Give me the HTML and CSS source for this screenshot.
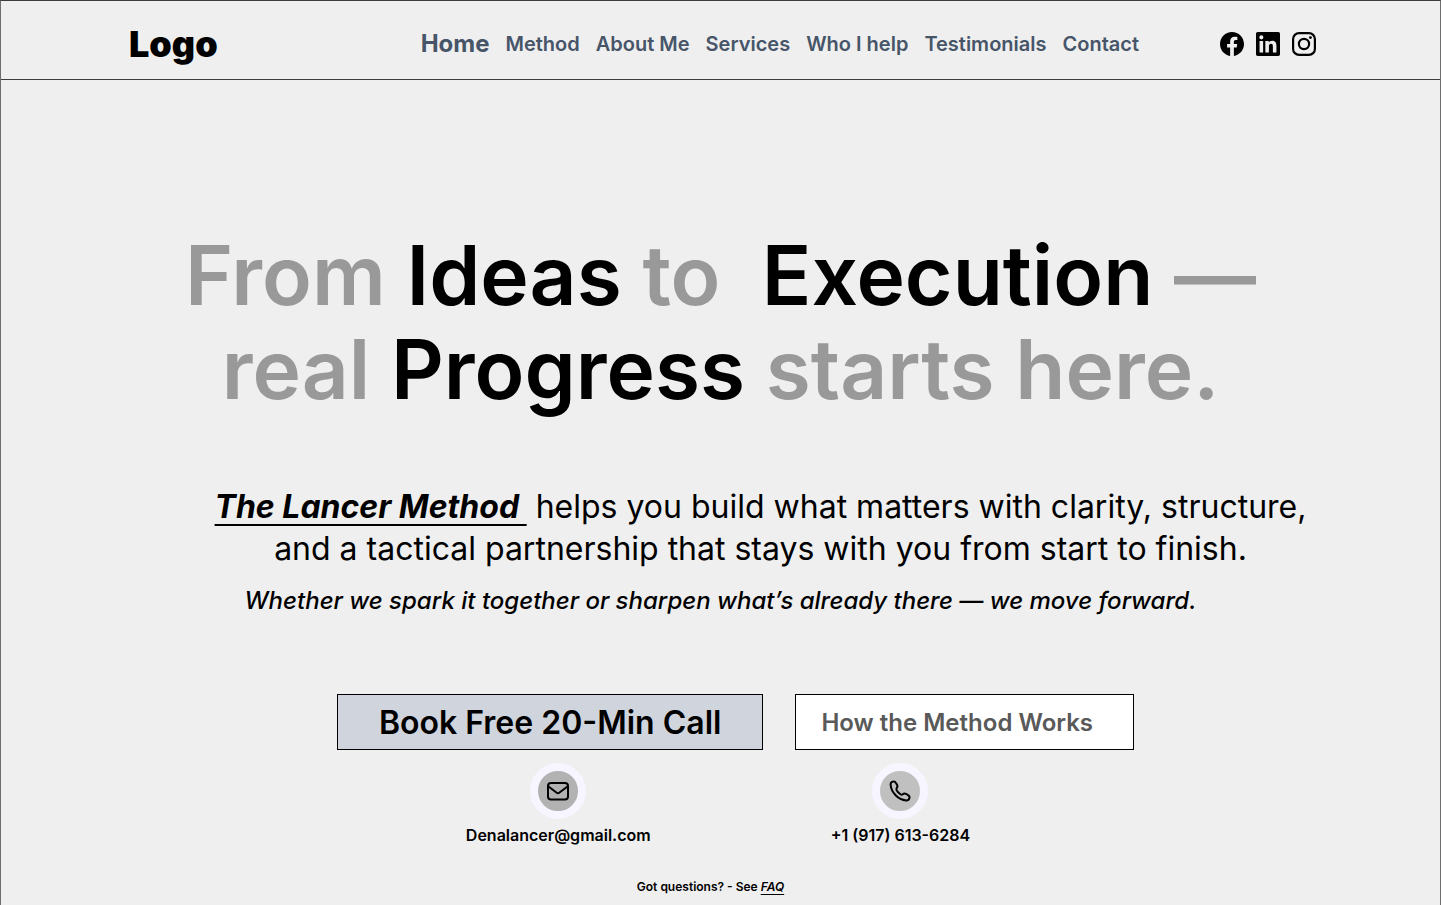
FILE: index.html
```html
<!DOCTYPE html>
<html lang="en">
<head>
<meta charset="utf-8">
<meta name="viewport" content="width=device-width, initial-scale=1">
<title>The Lancer Method</title>
<link rel="stylesheet" href="styles.css">
</head>
<body>
<div class="page">
  <header class="header">
    <a class="logo" href="#">Logo</a>
    <nav class="nav" aria-label="Main">
      <a class="nav-link nav-link-current" href="#" aria-current="page">Home</a>
      <a class="nav-link" href="#method">Method</a>
      <a class="nav-link" href="#about">About Me</a>
      <a class="nav-link" href="#services">Services</a>
      <a class="nav-link" href="#who">Who I help</a>
      <a class="nav-link" href="#testimonials">Testimonials</a>
      <a class="nav-link" href="#contact">Contact</a>
    </nav>
    <div class="social">
      <a class="social-link" href="#" aria-label="Facebook">
        <svg class="social-icon" viewBox="0 0 24 24"><path d="M24 12.07C24 5.4 18.63 0 12 0S0 5.4 0 12.07C0 18.1 4.39 23.1 10.13 24v-8.44H7.08v-3.49h3.05V9.41c0-3.02 1.79-4.69 4.53-4.69 1.31 0 2.68.24 2.68.24v2.97h-1.51c-1.49 0-1.96.93-1.96 1.89v2.25h3.33l-.53 3.49h-2.8V24C19.61 23.1 24 18.1 24 12.07z"/></svg>
      </a>
      <a class="social-link" href="#" aria-label="LinkedIn">
        <svg class="social-icon" viewBox="0 0 24 24"><path d="M22.23 0H1.77C.79 0 0 .77 0 1.73v20.54C0 23.23.79 24 1.77 24h20.46c.98 0 1.77-.77 1.77-1.73V1.73C24 .77 23.21 0 22.23 0zM7.12 20.45H3.56V9h3.56v11.45zM5.34 7.43a2.06 2.06 0 1 1 0-4.12 2.06 2.06 0 0 1 0 4.12zm15.11 13.02h-3.56v-5.57c0-1.33-.02-3.04-1.85-3.04-1.85 0-2.14 1.45-2.14 2.94v5.67H9.35V9h3.41v1.56h.05c.48-.9 1.64-1.85 3.37-1.85 3.6 0 4.27 2.37 4.27 5.46v6.28z"/></svg>
      </a>
      <a class="social-link" href="#" aria-label="Instagram">
        <svg class="social-icon" viewBox="0 0 24 24"><rect x="1.1" y="1.1" width="21.8" height="21.8" rx="6" fill="none" stroke="currentColor" stroke-width="2.2"/><circle cx="12" cy="12" r="5.1" fill="none" stroke="currentColor" stroke-width="2.2"/><circle cx="18.4" cy="5.6" r="1.45"/></svg>
      </a>
    </div>
  </header>

  <main class="hero">
    <h1 class="title">From <strong class="title-key">Ideas</strong> to&nbsp; <strong class="title-key">Execution</strong> —<br>real <strong class="title-key">Progress</strong> starts here.</h1>
    <p class="lead"><a class="lead-link" href="#method">The Lancer Method&nbsp;</a> helps you build what matters with clarity, structure,<br>and a tactical partnership that stays with you from start to finish.</p>
    <p class="note">Whether we spark it together or sharpen what’s already there — we move forward.</p>

    <div class="actions">
      <button class="button button-primary" type="button">Book Free 20-Min Call</button>
      <button class="button button-secondary" type="button">How the Method Works</button>
    </div>

    <div class="contacts">
      <a class="contact" href="mailto:Denalancer@gmail.com">
        <span class="badge badge-mail">
          <svg class="badge-icon" viewBox="0 0 24 24"><rect x="2" y="4" width="20" height="16.5" rx="3"/><path d="M2.500 7.500l8.200 6.300a2 2 0 0 0 2.500 0L21.500 7.500"/></svg>
        </span>
        Denalancer@gmail.com
      </a>
      <a class="contact" href="tel:+19176136284">
        <span class="badge badge-phone">
          <svg class="badge-icon" viewBox="0 0 24 24"><path d="M8.600 9.300C9.600 8.300 9.700 7 8.900 5.600L8.100 4.200C7.300 2.700 6 2.200 4.700 2.600 3.300 3 2.500 4.200 2.600 5.800c.3 3.800 2.100 7.500 5 10.500s6.700 4.800 10.600 5.100c1.600.1 2.800-.7 3.200-2.100.4-1.300-.1-2.600-1.600-3.400l-1.400-.8c-1.400-.8-2.700-.7-3.700.3-.8.800-1.900.4-3.500-1.100s-3.400-3.700-2.600-5z"/></svg>
        </span>
        +1 (917) 613-6284
      </a>
    </div>

    <p class="faq">Got questions? - See <a class="faq-link" href="#faq">FAQ</a></p>
  </main>
</div>
</body>
</html>
```
FILE: styles.css
```css
* {
  box-sizing: border-box;
}

body {
  margin: 0;
  background: #efefef;
  color: #000;
  font-family: Inter, "Liberation Sans", sans-serif;
}

a {
  color: inherit;
  text-decoration: none;
}

.page {
  min-height: 100vh;
  border: 1px solid #6e6e6e;
  border-top-color: #3c3c3c;
  border-bottom: 0;
}

.header {
  display: flex;
  align-items: center;
  height: 79px;
  padding: 8px 124px 0 128px;
  border-bottom: 1px solid #3c3c3c;
}

.logo {
  font-size: 36px;
  font-weight: 900;
  line-height: 44px;
}

.nav {
  display: flex;
  align-items: center;
  gap: 16px;
  margin-left: auto;
  margin-right: 81px;
  color: #475569;
}

.nav-link {
  font-size: 20px;
  font-weight: 600;
  line-height: 28px;
  white-space: nowrap;
}

.nav-link-current {
  font-size: 24px;
  font-weight: 700;
}

.social {
  display: flex;
  gap: 12px;
}

.social-link {
  display: flex;
}

.social-icon {
  width: 24px;
  height: 24px;
  fill: currentColor;
}

.hero {
  display: flex;
  flex-direction: column;
  align-items: center;
  padding: 149px 24px 0;
}

.title {
  margin: 0;
  color: #999;
  font-size: 82px;
  font-weight: 600;
  line-height: 94px;
  text-align: center;
}

.title-key {
  color: #000;
  font-weight: 600;
}

.lead {
  margin: 69px 0 0;
  padding-left: 80px;
  font-size: 32px;
  font-weight: 400;
  line-height: 42px;
  text-align: center;
}

.lead-link {
  font-style: italic;
  font-weight: 700;
  text-decoration: underline;
  text-decoration-thickness: 2px;
  text-underline-offset: 6px;
}

.note {
  margin: 15px 0 0;
  font-size: 24px;
  font-style: italic;
  font-weight: 500;
  line-height: 32px;
  text-align: center;
}

.actions {
  display: flex;
  gap: 32px;
  margin-top: 77px;
  padding-left: 30px;
}

.button {
  height: 56px;
  border: 1px solid #000;
  font-family: inherit;
  font-weight: 600;
}

.button-primary {
  padding: 0 41px;
  background: #d0d4dd;
  color: #000;
  font-size: 32px;
}

.button-secondary {
  padding: 0 40px 0 25px;
  background: #fff;
  color: #595959;
  font-size: 24px;
}

.contacts {
  display: flex;
  gap: 180px;
  margin-top: 13px;
  padding-right: 5px;
}

.contact {
  display: flex;
  flex-direction: column;
  align-items: center;
  gap: 4px;
  font-size: 16px;
  font-weight: 600;
  line-height: 24px;
}

.badge {
  display: flex;
  align-items: center;
  justify-content: center;
  width: 56px;
  height: 56px;
  border: 8px solid #f7f5ff;
  border-radius: 50%;
}

.badge-mail {
  background: #b2b2b2;
}

.badge-phone {
  background: #c0c0c0;
}

.badge-icon {
  width: 24px;
  height: 24px;
  fill: none;
  stroke: currentColor;
  stroke-width: 2;
  stroke-linecap: round;
  stroke-linejoin: round;
}

.faq {
  margin: 32px 0 0;
  padding-right: 20px;
  font-size: 12px;
  font-weight: 600;
  line-height: 16px;
}

.faq-link {
  font-style: italic;
  text-decoration: underline;
  text-underline-offset: 3px;
}
```
